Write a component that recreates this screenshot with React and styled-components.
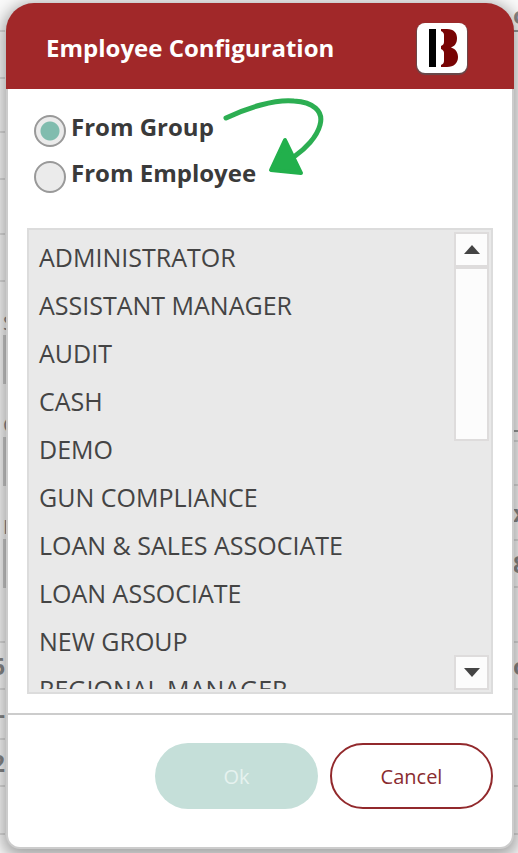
import React, { useRef, useState } from 'react';
import styled, { createGlobalStyle } from 'styled-components';

const GROUPS = [
  'ADMINISTRATOR',
  'ASSISTANT MANAGER',
  'AUDIT',
  'CASH',
  'DEMO',
  'GUN COMPLIANCE',
  'LOAN & SALES ASSOCIATE',
  'LOAN ASSOCIATE',
  'NEW GROUP',
  'REGIONAL MANAGER'
];

// what shows of the page behind the dialog, on either side of it
const LEFT_ROWS = [
  { height: 32 },
  { height: 47 },
  { height: 54 },
  { height: 47 },
  { height: 55 },
  { height: 47 }
];
const LEFT_FIELDS = ['S', 'C', 'I'];
const LEFT_BOTTOM_ROWS = [
  { height: 47, text: '6' },
  { height: 50, text: '(-' },
  { height: 47, text: '2' },
  { height: 48 }
];
const RIGHT_ROWS = [
  { height: 32, text: 'o', dark: true },
  { height: 400, dark: true },
  { height: 10 },
  { height: 44 },
  { height: 55, text: 'x' },
  { height: 47, text: '8' },
  { height: 55 },
  { height: 47, text: 'o' },
  { height: 50 },
  { height: 47 },
  { height: 48 }
];

const App = () => {
  const [source, setSource] = useState('group');
  const [selected, setSelected] = useState(null);
  const listRef = useRef(null);

  const scroll = amount => {
    listRef.current.scrollTop += amount;
  };

  return (
    <Page>
      <GlobalStyle />
      <Backdrop aria-hidden="true">
        <Column>
          {LEFT_ROWS.map((row, i) => (
            <BackdropRow key={i} height={row.height} />
          ))}
          <BackdropFields>
            {LEFT_FIELDS.map(text => (
              <div key={text}>
                <FieldLabel>{text}</FieldLabel>
                <Field />
              </div>
            ))}
          </BackdropFields>
          {LEFT_BOTTOM_ROWS.map((row, i) => (
            <BackdropRow key={i} height={row.height} align="flex-end">
              {row.text}
            </BackdropRow>
          ))}
        </Column>
        <Column>
          {RIGHT_ROWS.map((row, i) => (
            <BackdropRow key={i} height={row.height} dark={row.dark}>
              {row.text}
            </BackdropRow>
          ))}
        </Column>
      </Backdrop>
      <Dialog role="dialog" aria-labelledby="dialog-title">
        <Header>
          <Title id="dialog-title">Employee Configuration</Title>
          <Logo />
        </Header>
        <Body>
          <Sources>
            <SourceLabel>
              <Radio
                type="radio"
                name="source"
                checked={source === 'group'}
                onChange={() => setSource('group')}
              />
              <SourceText>From Group</SourceText>
            </SourceLabel>
            <SourceLabel>
              <Radio
                type="radio"
                name="source"
                checked={source === 'employee'}
                onChange={() => setSource('employee')}
              />
              <SourceText>From Employee</SourceText>
            </SourceLabel>
            <Arrow />
          </Sources>
          <ListBox>
            <List ref={listRef} role="listbox" aria-label="Groups">
              {GROUPS.map(group => (
                <Item
                  key={group}
                  role="option"
                  aria-selected={selected === group}
                  onClick={() => setSelected(group)}
                >
                  {group}
                </Item>
              ))}
            </List>
            <ScrollBar>
              <ScrollButton aria-label="Scroll up" onClick={() => scroll(-48)}>
                <svg width="16" height="9" viewBox="0 0 16 9">
                  <path d="M0 9L8 0L16 9Z" fill="#444" />
                </svg>
              </ScrollButton>
              <Thumb />
              <ScrollButton aria-label="Scroll down" onClick={() => scroll(48)}>
                <svg width="16" height="9" viewBox="0 0 16 9">
                  <path d="M0 0L8 9L16 0Z" fill="#444" />
                </svg>
              </ScrollButton>
            </ScrollBar>
          </ListBox>
        </Body>
        <Footer>
          <OkButton disabled={!selected}>Ok</OkButton>
          <CancelButton>Cancel</CancelButton>
        </Footer>
      </Dialog>
    </Page>
  );
};

const Logo = () => (
  <LogoTile>
    <svg width="50" height="50" viewBox="0 0 50 50">
      <rect x="12" y="6" width="7" height="38" fill="#000" />
      <path
        d="M24 6H30C37 6 40 10 40 15C40 20 38 23 34 24.5C39 26 41 30 41 34C41 40 37 44 30 44H24V42C26 41 27 40 27 38V30C27 28 26 27 24 26V23C26 22 27 21 27 19V12C27 10 26 9 24 8Z"
        fill="#780404"
      />
    </svg>
  </LogoTile>
);

const Arrow = () => (
  <ArrowSvg width="110" height="84" viewBox="0 0 110 84" aria-hidden="true">
    <path
      d="M9 24C30 14 58 5 77 7C96 8 107 17 103 31C100 43 88 55 78 62"
      fill="none"
      stroke="#2cae52"
      strokeWidth="5"
      strokeLinecap="round"
    />
    <path
      d="M68 46L54 76L84 79Z"
      fill="#22b04c"
      stroke="#22b04c"
      strokeWidth="4"
      strokeLinejoin="round"
    />
  </ArrowSvg>
);

const GlobalStyle = createGlobalStyle`
  * {
    box-sizing: border-box;
  }

  body {
    margin: 0;
    font-family: 'Segoe UI', 'Open Sans', 'Noto Sans', sans-serif;
    color: #444;
  }

  button {
    font-family: inherit;
    padding: 0;
    cursor: pointer;
  }
`;

const Page = styled.div`
  display: grid;
  min-height: 100vh;
  overflow: hidden;
  background: #fafafa;
`;

const Backdrop = styled.div`
  grid-area: 1 / 1;
  display: flex;
  justify-content: space-between;
`;

const Column = styled.div`
  display: flex;
  flex-direction: column;
  width: 5px;
`;

const BackdropRow = styled.div`
  display: flex;
  align-items: center;
  justify-content: ${props => props.align || 'flex-start'};
  height: ${props => props.height}px;
  border-bottom: 2px solid ${props => (props.dark ? '#999' : '#ddd')};
  font-size: 24px;
  line-height: 24px;
  font-weight: 700;
  white-space: nowrap;
  color: #888;
`;

const BackdropFields = styled.div`
  display: flex;
  flex-direction: column;
  gap: 29px;
  height: 361px;
  padding: 29px 0 0 3px;
  border-bottom: 2px solid #ddd;
`;

const FieldLabel = styled.div`
  font-size: 20px;
  line-height: 24px;
  color: #888;
`;

const Field = styled.div`
  height: 49px;
  border-left: 3px solid #ccc;
`;

const Dialog = styled.div`
  grid-area: 1 / 1;
  z-index: 1;
  display: flex;
  flex-direction: column;
  margin: 3px 4px 4px 6px;
  border-radius: 28px 28px 14px 14px;
  background: #ccc;
  box-shadow: 0 4px 16px 4px rgba(0, 0, 0, 0.35);
`;

const Header = styled.header`
  display: flex;
  align-items: center;
  justify-content: space-between;
  height: 86px;
  padding: 4px 47px 0 40px;
  border-radius: 28px 28px 0 0;
  background: #a12829;
`;

const Title = styled.h1`
  margin: 0;
  font-size: 24px;
  line-height: 32px;
  font-weight: 700;
  color: #fff;
`;

const LogoTile = styled.div`
  display: flex;
  width: 50px;
  height: 50px;
  border-radius: 8px;
  background: #fff;
  box-shadow: 0 1px 1px 1px #68494b;
`;

const Body = styled.main`
  flex: 1;
  margin: 0 2px;
  padding: 26px 19px 19px;
  background: #fff;
`;

const Sources = styled.div`
  position: relative;
  display: flex;
  flex-direction: column;
  align-items: flex-start;
  gap: 14px;
  padding: 0 7px 35px;
`;

const SourceLabel = styled.label`
  display: flex;
  align-items: flex-start;
  gap: 5px;
  cursor: pointer;
`;

const SourceText = styled.span`
  font-size: 24px;
  line-height: 24px;
  font-weight: 700;
  color: #3a3a3a;
`;

const Radio = styled.input`
  appearance: none;
  width: 32px;
  height: 32px;
  margin: 0;
  border: 2px solid #999;
  border-radius: 50%;
  background: #ebebeb;

  &:checked {
    background: radial-gradient(circle, #80bcae 9px, #ebebeb 10px);
  }
`;

const ArrowSvg = styled.svg`
  position: absolute;
  left: 190px;
  top: -21px;
  pointer-events: none;
`;

const ListBox = styled.div`
  display: flex;
  height: 466px;
  padding: 2px;
  border: 2px solid #dcdcdc;
  background: #e9e9e9;
`;

const List = styled.ul`
  flex: 1;
  margin: 0 0 1px;
  padding: 1px 8px;
  overflow: hidden;
  list-style: none;
`;

const Item = styled.li`
  font-size: 25px;
  line-height: 48px;
  white-space: nowrap;
  cursor: pointer;

  &[aria-selected='true'] {
    background: #c5dfd9;
  }
`;

const ScrollBar = styled.div`
  display: flex;
  flex-direction: column;
  width: 35px;
`;

const ScrollButton = styled.button`
  display: flex;
  align-items: center;
  justify-content: center;
  height: 35px;
  border: 2px solid #dedcdc;
  background: #fcfcfc;

  &:last-child {
    margin-top: auto;
  }
`;

const Thumb = styled.div`
  height: 174px;
  border: 2px solid #dedcdc;
  background: #fcfcfc;
`;

const Footer = styled.footer`
  display: flex;
  justify-content: flex-end;
  gap: 12px;
  margin: 0 2px 2px;
  padding: 28px 19px 38px;
  border-top: 2px solid #ccc;
  border-radius: 0 0 12px 12px;
  background: #fff;
`;

const Button = styled.button`
  width: 163px;
  height: 66px;
  padding-top: 2px;
  border-radius: 33px;
  font-size: 20px;
  line-height: 28px;
`;

const OkButton = styled(Button)`
  border: 0;
  background: #80bcae;
  color: #fff;

  &:disabled {
    background: #c5dfd9;
    color: #e6f2ef;
  }
`;

const CancelButton = styled(Button)`
  border: 2px solid #92292c;
  background: #fff;
  color: #8a2c30;
`;

export default App;
